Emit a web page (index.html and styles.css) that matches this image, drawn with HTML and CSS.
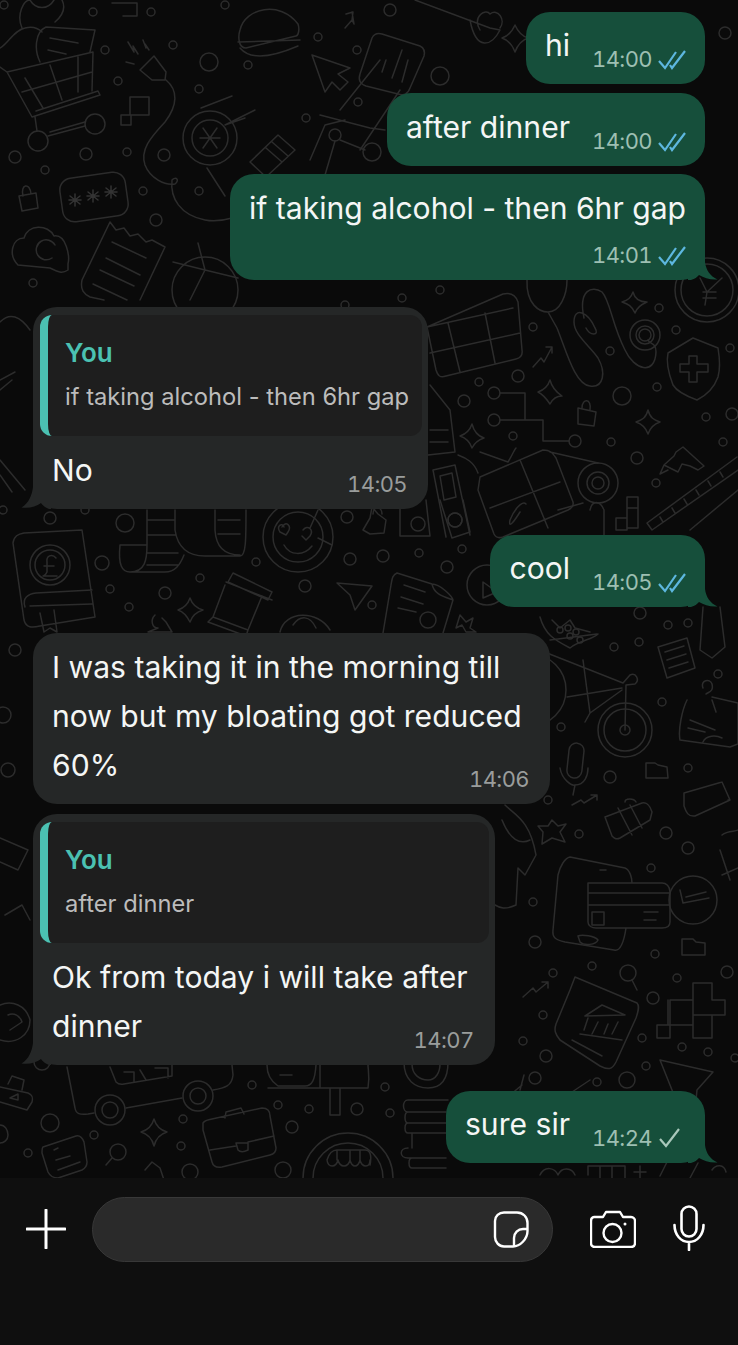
FILE: index.html
```html
<!DOCTYPE html>
<html lang="en">
<head>
<meta charset="UTF-8">
<meta name="viewport" content="width=device-width, initial-scale=1.0">
<title>Chat</title>
<link rel="stylesheet" href="styles.css">
</head>
<body>
<div class="screen">
    <svg class="doodles" width="738" height="1180" viewBox="0 0 738 1180" fill="none" stroke="#2c2c2c" stroke-width="1.5" stroke-linecap="round" stroke-linejoin="round">
        <!-- top left: cart, plug, turbine, password, cloud, receipt, pie -->
        <path d="M0 67 L7 72 L32 117 L100 95 L98 91 L36 111 M7 72 L93 52 L92 91 M25 78 L43 108 M50 65 L62 100 M78 57 L78 92 M22 92 L92 72 M35 117 L37 131 M48 136 L85 126 M50 132 L85 122"/>
        <circle cx="38" cy="141" r="10"/><circle cx="95" cy="124" r="10"/>
        <path d="M40 62 C34 50 35 32 46 27 L95 30 L90 52 M50 38 L78 43 M48 50 L66 54 M0 48 C8 44 14 30 25 28 C32 26 38 28 42 32 M22 28 C16 14 24 0 30 0 M62 0 C66 8 62 16 55 22 M30 0 C36 10 48 10 54 0"/>
        <path d="M130 97 H149 V115 H130 Z M121 115 H131 V125 H121 Z M123 3 H137 V16 H123 M112 3 H137"/>
        <path d="M140 70 L154 56 L166 72 L165 80 L152 80 Z M128 42 L134 52 L133 46 L138 54 M143 40 L146 48 L145 44 L149 50 M126 62 L134 64 M166 80 C178 90 178 105 165 122 C150 138 140 150 145 165 C150 178 165 186 175 184 C180 180 176 176 172 180 C170 198 180 215 205 220 C215 222 225 220 232 218"/>
        <circle cx="210" cy="138" r="27"/><circle cx="210" cy="138" r="18"/>
        <path d="M200 138 H220 M203 128 L217 148 M217 128 L203 148 M201 108 L232 96 M207 168 L225 196"/>
        <rect x="61" y="175" width="66" height="44" rx="12" transform="rotate(-8 94 197)"/>
        <path d="M75 194 v12 M69 200 h12 M70 196 l10 8 M80 196 l-10 8 M93 190 v12 M87 196 h12 M88 192 l10 8 M98 192 l-10 8 M111 186 v12 M105 192 h12 M106 188 l10 8 M116 188 l-10 8" stroke="#333"/>
        <path d="M19 196 L36 193 L38 208 L22 211 Z M23 196 C20 184 30 182 31 194"/>
        <path d="M18 265 C8 255 12 238 24 238 C28 224 48 224 54 236 C66 234 70 256 68 264 L68 270 C62 274 58 272 50 268 Z M55 245 A10 10 0 1 0 52 258"/>
        <path d="M110 222 L116 230 L124 228 L130 236 L138 234 L146 242 L152 240 L165 247 L140 300 M110 222 L82 280 C80 290 84 294 90 297 L104 300 M112 242 L146 258 M106 258 L140 275 M100 270 L134 286 M93 284 L127 300"/>
        <circle cx="205" cy="290" r="33"/><path d="M198 243 L205 270 L238 278 M205 270 L173 262 M205 270 L190 300"/>

        <!-- top middle: burger, cursor, bars, comb, network -->
        <path d="M240 30 C245 8 280 0 298 24 C300 30 298 36 296 36 L246 48 C238 48 238 36 240 30 Z M238 42 L300 40 M240 48 C250 60 270 58 298 46"/>
        <path d="M345 28 L352 20 L354 24 L352 12 M346 14 L353 12 L352 20"/>
        <path d="M372 38 C374 34 378 33 382 34 L420 46 C424 48 425 52 424 56 L410 88 C408 94 404 96 398 94 L366 86 C360 84 358 80 360 74 Z M382 72 L386 60 M392 78 L402 50 M402 82 L408 60"/>
        <path d="M312 55 L350 68 L338 74 L348 82 L340 90 L332 82 L325 92 Z"/>
        <path d="M415 0 L490 28 L500 30 C492 46 476 52 470 20 M480 30 C472 16 486 8 490 14 C498 8 506 20 500 28"/>
        <path d="M515 25 C518 32 522 36 528 38 C522 40 518 44 515 52 C512 44 508 40 502 38 C508 36 512 32 515 25 Z"/>
        <path d="M345 120 L325 125 L310 160 M255 110 L225 125 L245 118 M320 115 L370 128 L385 130 M380 60 L340 110 M400 90 L360 150"/>
        <path d="M278 135 L295 150 L266 177 L250 162 Z M272 142 L288 156 M266 148 L282 162"/>
        <circle cx="335" cy="135" r="6"/><circle cx="372" cy="152" r="9"/>
        <path d="M335 141 L325 175 M340 140 L365 150"/>

        <!-- right: table, sausage, shield, circuit, gift, ruler -->
        <path d="M427 327 L503 294 C512 292 516 296 518 302 L522 350 C523 356 520 358 516 359 L446 376 C440 378 438 376 436 370 Z M448 323 L460 372 M485 313 L495 363 M430 353 L520 333 M427 327 L513 308"/>
        <path d="M527 280 C526 305 540 312 548 312 C560 312 567 295 567 280 M548 312 L557 328 C566 350 575 385 590 386 C604 388 606 372 598 358 C590 346 574 335 574 322 C574 306 588 312 595 328 C600 336 590 336 586 328 M584 318 C578 290 592 285 602 292 C610 300 612 325 625 350 C634 370 655 376 656 352 C656 342 650 345 648 340"/>
        <path d="M633 292 C635 300 640 302 647 302 C640 305 636 310 635 313 C632 306 628 304 622 302 C628 300 631 298 633 292 Z"/>
        <circle cx="645" cy="335" r="15"/><circle cx="645" cy="335" r="9"/><circle cx="645" cy="335" r="6"/>
        <path d="M693 338 L718 348 C720 360 720 370 718 377 C714 388 705 396 697 400 C686 396 676 390 673 385 C668 372 666 362 668 353 Z"/>
        <path d="M689 356 H697 V364 H708 V372 H697 V382 H689 V372 H680 V364 H689 Z"/>
        <circle cx="707" cy="290" r="32"/><circle cx="707" cy="290" r="26"/>
        <path d="M700 278 L707 292 L722 278 M703 292 H716 M703 298 H716 M707 292 L705 305"/>
        <path d="M533 367 L541 358 L544 362 L552 347 M546 347 H552 V353"/>
        <circle cx="494" cy="393" r="6"/><circle cx="494" cy="420" r="6"/><circle cx="575" cy="441" r="6"/>
        <path d="M500 393 H525 V420 H500 M525 420 H543 V441 H569"/>
        <path d="M550 380 C552 388 556 392 562 396 C556 396 552 400 550 404 C546 398 542 394 538 392 C544 390 548 386 550 380 Z"/>
        <path d="M578 408 L596 412 L594 426 L578 424 Z M582 408 C582 398 592 398 590 410"/>
        <circle cx="622" cy="396" r="9"/>
        <path d="M648 410 C650 418 654 420 660 422 C654 424 650 428 648 434 C646 428 642 424 636 422 C642 420 646 418 648 410 Z"/>
        <path d="M683 447 L704 466 L698 470 L690 466 L682 464 L678 472 L664 465 L674 456 L676 452 Z M664 465 L660 474 L668 470"/>
        <path d="M647 523 L737 457 M652 530 L738 470 M647 523 L652 530 M660 517 L663 522 M672 508 L675 513 M684 499 L687 504 M696 490 L699 495 M708 481 L711 486 M720 472 L723 477 M738 490 L690 530"/>
        <path d="M480 477 L543 450 C550 450 552 452 556 458 L573 502 C574 506 572 508 568 510 L503 537 C500 538 496 538 494 534 L478 490 Z M520 460 L548 528 M490 508 L560 482 M478 473 C474 462 466 458 458 455 M508 462 C514 452 514 450 516 448 M508 462 L480 452 M520 512 C515 520 508 530 510 520 C514 510 522 500 526 504 M550 452 L598 463"/>
        <circle cx="598" cy="483" r="20"/><circle cx="598" cy="483" r="11"/><circle cx="598" cy="483" r="6"/>
        <path d="M627 497 H638 V528 H627 Z M627 508 H638 M616 518 H627 V530 H616 Z M583 503 L558 510"/>
        <path d="M433 470 L455 465 L470 535 M433 470 L446 537 M440 476 L452 473 L456 497 L444 500 Z"/><circle cx="455" cy="520" r="7"/>
        <path d="M430 385 L450 410 L455 452 L428 455 M430 430 H448 M430 442 H448"/>
        <path d="M472 424 C474 432 478 436 484 438 C478 440 474 444 472 448 C470 442 466 438 460 436 C466 434 470 430 472 424 Z"/>
        <path d="M590 510 C592 500 600 500 604 510 V538"/>

        <!-- below first quote: book, scroll, smiley, cup, plane, doc -->
        <path d="M13 543 C14 536 18 534 24 533 L82 530 L95 617 L40 626 C32 628 26 628 24 620 Z M25 607 C22 598 28 594 36 593 L92 590 M30 606 L92 604 M40 613 L44 632 L50 628 L57 632 L54 610"/>
        <circle cx="50" cy="565" r="20"/><circle cx="50" cy="565" r="15"/>
        <path d="M56 558 C52 553 46 556 47 562 L47 572 C46 574 44 576 43 576 H57 M44 566 H54"/>
        <path d="M147 510 V545 C147 560 145 572 130 572 C122 572 118 565 120 545 H147 M147 520 H175 M147 535 H175 M147 553 H178 M147 565 H178 M130 572 H165 C175 572 180 565 184 555 M175 510 V530 C178 550 190 556 205 556 H240 C246 556 246 540 246 510 M215 510 V530 C216 548 225 555 240 555 M218 520 H240 M218 534 H240"/>
        <circle cx="298" cy="537" r="35"/><circle cx="298" cy="537" r="25"/>
        <path d="M282 527 C286 520 292 526 288 532 L286 535 L280 532 C276 526 282 522 284 527 M303 530 C308 524 314 530 310 536 L306 540 L302 536 M284 545 C290 556 304 556 312 546 M318 510 L310 528 M332 545 L318 538"/>
        <path d="M372 507 L370 518 L363 530 L370 534 L384 533 L386 520 L378 514 Z M373 514 C373 506 382 506 382 514"/>
        <path d="M400 500 V536 H430 L426 500 M440 500 L452 538 L470 532 L463 500"/>
        <circle cx="418" cy="524" r="7"/><circle cx="455" cy="520" r="7"/>
        <path d="M233 573 L272 592 L268 600 L228 582 Z M226 582 L272 600 M225 585 L213 617 L248 630 L262 596 M213 617 L208 622 L246 636 L248 630"/>
        <path d="M190 598 C192 604 196 608 203 610 C196 612 192 616 190 622 C187 616 184 612 178 610 C184 608 188 604 190 598 Z"/>
        <path d="M337 583 L372 586 L355 610 L350 595 Z"/>
        <path d="M397 573 L432 584 C440 584 452 596 453 600 L443 633 M432 584 C434 594 442 596 453 600 M397 573 C392 575 392 580 391 585 L383 633 M404 585 L425 592 M401 597 L423 604 M398 608 L416 612"/>
        <circle cx="428" cy="620" r="8"/>
        <path d="M460 615 L466 622 L473 618 L470 628 L476 632 L466 632 L462 625 L456 628 Z"/>
        <circle cx="487" cy="585" r="20"/><path d="M483 582 L497 592 L483 598 Z"/>
        <path d="M280 632 C285 610 318 610 330 630 M293 625 C300 615 310 615 316 628"/>
        <path d="M155 615 C150 620 152 628 158 628 L148 632 H172 L166 622 L162 618"/>

        <!-- right of the long message: bike, tie, stamp, bag -->
        <path d="M547 653 L623 683 L630 675 C636 672 640 680 635 684 L626 685 L625 730 M567 697 L622 688 M583 660 L590 713 L622 690 M590 713 L585 722 M552 620 L560 628 L570 620 L575 628 L590 632 M540 617 C545 635 555 640 570 648 C580 640 592 640 598 634 M550 640 L597 634"/>
        <circle cx="625" cy="730" r="27"/><circle cx="625" cy="730" r="21"/><circle cx="625" cy="730" r="5"/>
        <circle cx="530" cy="690" r="36"/>
        <circle cx="560" cy="630" r="3"/><circle cx="568" cy="628" r="3"/><circle cx="576" cy="632" r="3"/><circle cx="570" cy="636" r="3"/><circle cx="580" cy="640" r="3"/>
        <path d="M703 607 L700 650 L712 658 L725 647 L720 607"/>
        <path d="M658 647 L687 638 L695 668 L667 678 Z M665 652 L684 646 M667 660 L686 654 M669 668 L688 662"/>
        <path d="M687 700 C682 710 678 730 680 740 L730 747 L738 744 V703 L712 697 M703 688 C700 680 710 678 712 684 C714 692 708 692 706 694 M690 720 L715 730 M688 728 L705 732 M703 742 C706 735 716 735 722 738 M712 700 L716 712"/>
        <rect x="568" y="743" width="15" height="35" rx="7.5" transform="rotate(6 575 760)"/>
        <path d="M560 768 C562 780 572 786 575 785 C585 785 588 775 588 768 M575 785 L573 795"/>
        <path d="M646 763 H655 L658 765 L667 767 L668 778 L646 778 Z"/>
        <path d="M684 793 L722 782 L730 800 L695 816 C688 817 686 812 684 806 Z M722 782 L730 800 L728 800"/>
        <path d="M572 805 L581 800 L584 803 L597 795 M591 795 H597 V800"/>
        <path d="M605 817 L642 803 C646 802 650 805 652 812 L650 820 L620 838 C616 840 614 838 612 836 Z M618 808 L632 835 M630 805 L642 828 M625 802 C625 798 634 798 636 802"/>
        <path d="M552 820 L558 826 L566 824 L560 832 L565 842 L552 838 L542 844 L543 832 L538 826 L548 826 Z"/>
        <path d="M505 805 C515 815 530 820 536 855 L525 875 L518 868 L516 905 C505 910 500 908 495 905 M502 820 C510 840 520 845 530 840"/>
        <path d="M570 857 C565 858 560 866 558 875 L553 930 C552 938 556 940 565 942 L614 950 C620 952 624 942 626 928 M570 857 L625 868 C630 870 632 878 632 883 M600 870 L606 870 M588 883 H662 C666 883 670 886 670 892 V922 C670 926 668 928 662 928 H596 C592 928 588 926 588 922 Z M588 893 H670 M588 905 H670 M592 912 H604 V925 H592 Z M644 912 H658 M644 920 H656"/>
        <path d="M578 936 C582 934 595 936 598 940 C596 945 584 946 580 942 Z"/>
        <circle cx="693" cy="900" r="24"/><path d="M680 890 L683 903 L709 898 M686 897 L706 892"/>
        <path d="M682 939 H693 L696 942 L705 943 L705 955 H682 Z"/>
        <path d="M722 835 C728 830 735 832 738 830 M720 850 L730 880 M722 875 L738 868"/>
        <circle cx="628" cy="973" r="8"/><path d="M632 980 L637 990"/>
        <path d="M575 977 L637 1003 C640 1006 638 1012 636 1018 L616 1062 C612 1070 608 1070 600 1066 L560 1040 C555 1034 554 1030 556 1024 L570 990 Z"/>
        <path d="M585 1016 L602 1005 L625 1015 L585 1016 M588 1018 L584 1030 M598 1022 L592 1034 M608 1024 L604 1034 M618 1022 L612 1034 M580 1034 L622 1040 M572 1040 L602 1056"/>
        <path d="M693 983 H712 V1000 H725 V1015 H712 V1038 H693 V1025 H657 V1038 H670 V1000 H693 Z M668 1025 V1000 M693 1000 V1025 M693 1015 H712"/>
        <path d="M660 1060 L713 1072 L697 1090 L695 1110 M660 1060 L680 1110"/>
        <path d="M523 997 L533 988 L536 992 L548 982 M542 982 H548 V988"/>
        <path d="M524 1075 L520 1090 M504 1100 L522 1085 M590 1080 L560 1100 C560 1108 572 1110 580 1105 M540 1140 C548 1128 560 1130 566 1140"/>

        <!-- left edge behind received bubbles -->
        <path d="M0 838 L28 850 L18 870 L0 862 M5 915 L22 905 L30 920 M0 1005 C12 1000 26 1005 30 1020 C30 1035 16 1045 0 1040 M8 1015 C14 1012 20 1016 22 1022 L10 1030"/>
        <path d="M0 460 L25 490 M0 475 L12 492 M0 380 L15 372 M0 390 L12 380 M0 322 C10 312 20 316 30 330"/>
        <circle cx="15" cy="650" r="6"/><circle cx="8" cy="770" r="7"/><circle cx="3" cy="715" r="8"/>

        <!-- bottom: big cart, briefcase, stand, shop, coins -->
        <path d="M67 1067 L75 1108 C76 1114 80 1115 88 1114 L94 1113 M126 1108 L182 1098 M213 1090 C225 1088 232 1086 233 1075 L232 1065 M110 1067 L116 1082 C118 1084 120 1085 124 1084 L172 1076 L172 1065 M124 1072 H134 V1082 M140 1070 L146 1080 M155 1068 H168 V1078"/>
        <circle cx="110" cy="1110" r="15"/><circle cx="110" cy="1110" r="8"/><circle cx="198" cy="1096" r="15"/><circle cx="198" cy="1096" r="8"/>
        <path d="M0 1087 L28 1093 C33 1095 33 1098 32 1102 L27 1110 L0 1102 M8 1084 L12 1076 L24 1080 L22 1090 M10 1098 L18 1094 L18 1100 Z M0 1125 C5 1125 8 1130 8 1135 C8 1140 4 1143 0 1143"/>
        <path d="M203 1123 C205 1120 208 1120 212 1119 L262 1108 C268 1108 270 1112 270 1116 L276 1148 C276 1152 274 1154 270 1155 L222 1167 C216 1168 213 1166 212 1162 L203 1130 Z M225 1118 L226 1112 L241 1108 L244 1114 M210 1150 L236 1146 M248 1142 L274 1136 M236 1143 H248 V1150 C244 1152 240 1152 238 1150 Z"/>
        <path d="M154 1119 C156 1126 160 1130 167 1132 C160 1134 156 1138 154 1146 C152 1138 148 1134 141 1132 C148 1130 152 1126 154 1119 Z"/>
        <path d="M43 1147 L76 1136 C80 1135 82 1137 84 1142 L87 1162 C87 1166 86 1168 82 1170 L58 1178 C53 1178 50 1176 48 1172 L42 1153 C42 1150 42 1148 43 1147 Z M54 1150 L58 1148 M56 1160 L70 1156 M58 1170 L80 1162"/>
        <circle cx="118" cy="1152" r="8"/><path d="M112 1158 L106 1165 M145 1170 L152 1162 L160 1168 L164 1180"/>
        <path d="M268 1088 H368 C370 1075 368 1070 368 1065 M267 1065 C267 1075 272 1082 278 1086 H305 C312 1086 315 1080 316 1065 M320 1065 V1088 M280 1075 H292 M330 1088 V1115 H340 V1088"/>
        <circle cx="348" cy="1178" r="45"/><circle cx="348" cy="1178" r="35"/>
        <path d="M327 1160 C330 1150 335 1150 337 1150 H365 C370 1150 372 1155 370 1165 M327 1160 C328 1168 336 1168 338 1160 C340 1168 348 1168 350 1160 C352 1168 358 1168 360 1160 C362 1168 370 1168 370 1160 M337 1150 V1160 M350 1150 V1160 M360 1150 V1160"/>
        <path d="M448 1100 H408 C402 1100 402 1112 408 1112 H446 M408 1112 C404 1112 404 1123 408 1123 H446 M408 1123 C404 1123 404 1133 408 1133 H446 M412 1133 V1148 M408 1148 C399 1148 399 1158 408 1158 H446 M412 1158 C408 1158 408 1168 412 1168 H446"/>
        <path d="M404 1062 C404 1080 415 1088 428 1088 C442 1088 448 1078 448 1062 M412 1064 C412 1075 420 1080 428 1080 C436 1080 440 1072 440 1064"/>
        <path d="M540 1175 C545 1165 555 1168 558 1175 C562 1166 572 1168 575 1175 M588 1175 V1166 H625 V1178 M600 1166 V1178 M612 1166 V1178 M640 1166 V1178 M634 1172 H646 M660 1176 L668 1160 M698 1163 L690 1178 M712 1170 C716 1164 724 1164 726 1172"/>

        <!-- small dots and rings -->
        <g>
            <circle cx="93" cy="12" r="4"/><circle cx="151" cy="12" r="4"/><circle cx="105" cy="50" r="4"/><circle cx="173" cy="45" r="4"/><circle cx="118" cy="81" r="4"/><circle cx="209" cy="62" r="9"/><circle cx="199" cy="89" r="4"/><circle cx="15" cy="157" r="6"/><circle cx="86" cy="154" r="6"/><circle cx="45" cy="170" r="4"/><circle cx="127" cy="152" r="4"/><circle cx="164" cy="155" r="6"/><circle cx="143" cy="191" r="4"/><circle cx="199" cy="191" r="4"/><circle cx="156" cy="220" r="6"/><circle cx="33" cy="283" r="4"/><circle cx="4" cy="5" r="4"/>
            <circle cx="248" cy="65" r="4"/><circle cx="318" cy="37" r="4"/><circle cx="357" cy="50" r="4"/><circle cx="306" cy="118" r="4"/><circle cx="358" cy="102" r="4"/><circle cx="440" cy="76" r="9"/><circle cx="225" cy="5" r="4"/><circle cx="390" cy="10" r="6"/><circle cx="725" cy="33" r="6"/>
            <circle cx="440" cy="290" r="4"/><circle cx="533" cy="327" r="4"/><circle cx="518" cy="376" r="6"/><circle cx="479" cy="382" r="4"/><circle cx="464" cy="401" r="6"/><circle cx="610" cy="351" r="4"/><circle cx="659" cy="308" r="4"/><circle cx="676" cy="330" r="4"/><circle cx="730" cy="348" r="4"/><circle cx="657" cy="387" r="4"/><circle cx="706" cy="417" r="4"/><circle cx="732" cy="414" r="6"/><circle cx="723" cy="442" r="4"/><circle cx="611" cy="442" r="4"/><circle cx="637" cy="458" r="6"/><circle cx="656" cy="483" r="4"/><circle cx="513" cy="436" r="4"/><circle cx="345" cy="305" r="4"/><circle cx="402" cy="298" r="4"/>
            <circle cx="125" cy="523" r="9"/><circle cx="102" cy="563" r="7"/><circle cx="50" cy="518" r="6"/><circle cx="110" cy="589" r="4"/><circle cx="129" cy="607" r="4"/><circle cx="165" cy="593" r="6"/><circle cx="200" cy="578" r="4"/><circle cx="256" cy="562" r="4"/><circle cx="305" cy="586" r="6"/><circle cx="347" cy="517" r="6"/><circle cx="350" cy="559" r="6"/><circle cx="383" cy="556" r="6"/><circle cx="419" cy="553" r="4"/><circle cx="462" cy="549" r="4"/><circle cx="447" cy="567" r="6"/><circle cx="372" cy="605" r="4"/><circle cx="3" cy="510" r="4"/><circle cx="85" cy="510" r="4"/>
            <circle cx="640" cy="613" r="6"/><circle cx="668" cy="625" r="4"/><circle cx="688" cy="623" r="4"/><circle cx="639" cy="642" r="4"/><circle cx="614" cy="647" r="4"/><circle cx="718" cy="674" r="4"/><circle cx="662" cy="702" r="4"/><circle cx="561" cy="727" r="4"/><circle cx="610" cy="777" r="6"/><circle cx="688" cy="768" r="4"/><circle cx="548" cy="800" r="4"/><circle cx="579" cy="834" r="4"/><circle cx="666" cy="833" r="6"/><circle cx="688" cy="848" r="6"/><circle cx="651" cy="868" r="4"/><circle cx="533" cy="902" r="4"/><circle cx="535" cy="942" r="6"/><circle cx="655" cy="954" r="4"/><circle cx="727" cy="972" r="6"/><circle cx="677" cy="978" r="4"/><circle cx="592" cy="966" r="4"/><circle cx="553" cy="973" r="4"/><circle cx="653" cy="998" r="6"/><circle cx="543" cy="1015" r="4"/><circle cx="523" cy="1041" r="4"/><circle cx="642" cy="1038" r="4"/><circle cx="546" cy="1056" r="6"/><circle cx="682" cy="1047" r="4"/><circle cx="708" cy="1052" r="4"/><circle cx="535" cy="1078" r="6"/><circle cx="597" cy="1082" r="4"/><circle cx="627" cy="1080" r="8"/><circle cx="646" cy="1066" r="4"/><circle cx="735" cy="1058" r="4"/>
            <circle cx="50" cy="1123" r="9"/><circle cx="94" cy="1135" r="4"/><circle cx="28" cy="1153" r="4"/><circle cx="183" cy="1119" r="4"/><circle cx="181" cy="1146" r="4"/><circle cx="252" cy="1085" r="4"/><circle cx="278" cy="1105" r="4"/><circle cx="309" cy="1109" r="4"/><circle cx="292" cy="1127" r="6"/><circle cx="357" cy="1109" r="6"/><circle cx="385" cy="1087" r="4"/><circle cx="390" cy="1113" r="4"/><circle cx="283" cy="1170" r="8"/><circle cx="190" cy="1172" r="8"/><circle cx="42" cy="1062" r="8"/>
        </g>
    </svg>

    <main class="chat">
        <div class="row out">
            <div class="bubble sent">
                <span class="body">hi</span>
                <span class="meta">14:00
                    <svg class="tick" width="28" height="22" viewBox="0 0 28 22" fill="none" stroke="#5db7df" stroke-width="2.2"><path d="M1 13 L7 20 L18 4 M12 17 L14 20 L27 3"/></svg>
                </span>
            </div>
        </div>
        <div class="row out">
            <div class="bubble sent tall">
                <span class="body">after dinner</span>
                <span class="meta">14:00
                    <svg class="tick" width="28" height="22" viewBox="0 0 28 22" fill="none" stroke="#5db7df" stroke-width="2.2"><path d="M1 13 L7 20 L18 4 M12 17 L14 20 L27 3"/></svg>
                </span>
            </div>
        </div>
        <div class="row out gap-8">
            <div class="bubble sent tail stacked">
                <span class="body">if taking alcohol - then 6hr gap</span>
                <span class="meta">14:01
                    <svg class="tick" width="28" height="22" viewBox="0 0 28 22" fill="none" stroke="#5db7df" stroke-width="2.2"><path d="M1 13 L7 20 L18 4 M12 17 L14 20 L27 3"/></svg>
                </span>
            </div>
        </div>

        <div class="row in gap-27">
            <div class="bubble received tail quoted">
                <div class="quote">
                    <div class="quote-name">You</div>
                    <div class="quote-text">if taking alcohol - then 6hr gap</div>
                </div>
                <div class="line">
                    <span class="body">No</span>
                    <span class="meta">14:05</span>
                </div>
            </div>
        </div>

        <div class="row out gap-26">
            <div class="bubble sent tail">
                <span class="body">cool</span>
                <span class="meta">14:05
                    <svg class="tick" width="28" height="22" viewBox="0 0 28 22" fill="none" stroke="#5db7df" stroke-width="2.2"><path d="M1 13 L7 20 L18 4 M12 17 L14 20 L27 3"/></svg>
                </span>
            </div>
        </div>

        <div class="row in gap-26">
            <div class="bubble received multi">
                <div class="body">I was taking it in the morning till<br>now but my bloating got reduced</div>
                <div class="line">
                    <span class="body">60%</span>
                    <span class="meta">14:06</span>
                </div>
            </div>
        </div>

        <div class="row in gap-10">
            <div class="bubble received tail quoted">
                <div class="quote">
                    <div class="quote-name">You</div>
                    <div class="quote-text">after dinner</div>
                </div>
                <div class="body first-line">Ok from today i will take after</div>
                <div class="line">
                    <span class="body">dinner</span>
                    <span class="meta">14:07</span>
                </div>
            </div>
        </div>

        <div class="row out gap-26">
            <div class="bubble sent tail">
                <span class="body">sure sir</span>
                <span class="meta">14:24
                    <svg class="tick" width="28" height="22" viewBox="0 0 28 22" fill="none" stroke="#a9c8bb" stroke-width="2.2"><path d="M2 12 L8 19 L21 2"/></svg>
                </span>
            </div>
        </div>
    </main>

    <footer class="composer">
        <svg class="plus" width="40" height="40" viewBox="0 0 40 40"><path d="M20 1 V39 M1 20 H39" stroke="#fff" stroke-width="3" stroke-linecap="round"/></svg>
        <div class="field">
            <svg width="36" height="37" viewBox="0 0 36 37" fill="none" stroke="#fff" stroke-width="2.4"><path d="M11 1.500 H24 C30 1.500 34.500 6 34.500 12 V20 C34.500 28 27 35.500 20 35.500 H11 C6 35.500 2 31 2 26 V10 C2 5 6 1.500 11 1.500 Z"/><path d="M34 18 H30 C25 18 21 22 21 27 V35"/></svg>
        </div>
        <svg class="camera" width="46" height="38" viewBox="0 0 46 38" fill="none" stroke="#fff" stroke-width="2.400" stroke-linejoin="round"><path d="M4 7 H13 L16 2 H30 L33 7 H41 C43.500 7 45 9 45 11 V33 C45 35.500 43.500 37 41 37 H5 C2.500 37 1 35.500 1 33 V11 C1 9 2 7 4 7 Z"/><circle cx="22.500" cy="23" r="9"/><circle cx="35" cy="14" r="1.500" fill="#fff" stroke="none"/></svg>
        <svg class="mic" width="32" height="46" viewBox="0 0 32 46" fill="none" stroke="#fff" stroke-width="2.600" stroke-linecap="round"><rect x="8.500" y="1.500" width="15" height="30" rx="7.500"/><path d="M1.500 20 C1.500 30 8 37 16 37 C24 37 30.500 30 30.500 20 M16 37 V45"/></svg>
    </footer>
</div>
</body>
</html>
```
FILE: styles.css
```css
* {
    box-sizing: border-box;
}

html, body {
    margin: 0;
    padding: 0;
    background-color: #0a0a0a;
}

.screen {
    position: relative;
    width: 738px;
    height: 1345px;
    display: flex;
    flex-direction: column;
    overflow: hidden;
    font-family: Inter, "Liberation Sans", sans-serif;
    color: #f4f6f5;
}

.doodles {
    position: absolute;
    top: 0;
    left: 0;
}

.chat {
    position: relative;
    flex: 1;
    padding: 12px 33px 0 33px;
    display: flex;
    flex-direction: column;
}

.row {
    display: flex;
    margin-top: 9px;
}

.row:first-child {
    margin-top: 0;
}

.row.gap-8 {
    margin-top: 8px;
}

.row.gap-10 {
    margin-top: 10px;
}

.row.gap-26 {
    margin-top: 26px;
}

.row.gap-27 {
    margin-top: 27px;
}

.row.out {
    justify-content: flex-end;
}

.bubble {
    position: relative;
    border-radius: 24px;
    font-size: 30.1px;
    line-height: 49px;
}

.sent {
    background-color: #164f3b;
    padding: 9px 19px 14px 19px;
    display: flex;
    gap: 22px;
    height: 72px;
}

.sent.tall {
    height: 73px;
    padding-top: 10px;
}

.sent.stacked {
    display: block;
    height: 106px;
    padding-top: 10px;
}

.sent.stacked .meta {
    display: flex;
    justify-content: flex-end;
    margin-top: 7px;
}

.received {
    background-color: #252727;
}

.multi {
    width: 517px;
    padding: 10px 21px 0 19px;
}

.quoted {
    padding: 8px 6px 0 7px;
}

.quote {
    height: 121px;
    background-color: #1e1e1e;
    border-left: 8px solid #4bc1b2;
    border-radius: 12px;
    padding: 18px 13px 0 17px;
}

.quote-name {
    color: #4bc1b2;
    font-size: 26px;
    font-weight: 600;
    line-height: 40px;
}

.quote-text {
    color: #bcbcbc;
    font-size: 23.7px;
    line-height: 48px;
}

.first-line {
    padding: 10px 21px 0 12px;
}

.line {
    display: flex;
    justify-content: space-between;
    padding: 10px 15px 14px 12px;
}

.first-line + .line {
    padding-top: 0;
}

.multi .line {
    padding: 0 0 14px 0;
}

.meta {
    display: inline-flex;
    align-items: center;
    gap: 6px;
    height: 30px;
    margin-top: 23px;
    margin-bottom: -4px;
    font-size: 22px;
    font-feature-settings: "tnum";
    letter-spacing: -0.6px;
    line-height: 30px;
    color: #9a9d9c;
}

.sent .meta {
    color: #9dbfb2;
}

.tail::after {
    content: "";
    position: absolute;
    bottom: 0;
    width: 30px;
    height: 26px;
}

.sent.tail::after {
    right: -13px;
    background-color: #164f3b;
    clip-path: path("M0 0 H17 V8 C18 16 22 22 29.5 25.500 C22 26 16 24 11 21 C9 23 7 25 3 26 H0 Z");
}

.received.tail::after {
    left: -12px;
    background-color: #252727;
    clip-path: path("M30 0 H12 V4 C11 12 8 20 0.5 24.500 C8 25.500 15 24 20 20 C22 23 25 25 28 26 H30 Z");
}

.composer {
    position: relative;
    height: 167px;
    background-color: #0f0f0f;
    display: flex;
    align-items: flex-start;
    padding: 19px 0 0 26px;
}

.plus {
    margin-top: 12px;
}

.field {
    width: 461px;
    height: 65px;
    margin-left: 26px;
    border-radius: 33px;
    background-color: #2a2a2a;
    border: 1px solid #383838;
    display: flex;
    align-items: center;
    justify-content: flex-end;
    padding-right: 23px;
}

.camera {
    margin: 13px 0 0 37px;
}

.mic {
    margin: 8px 0 0 37px;
}
```
